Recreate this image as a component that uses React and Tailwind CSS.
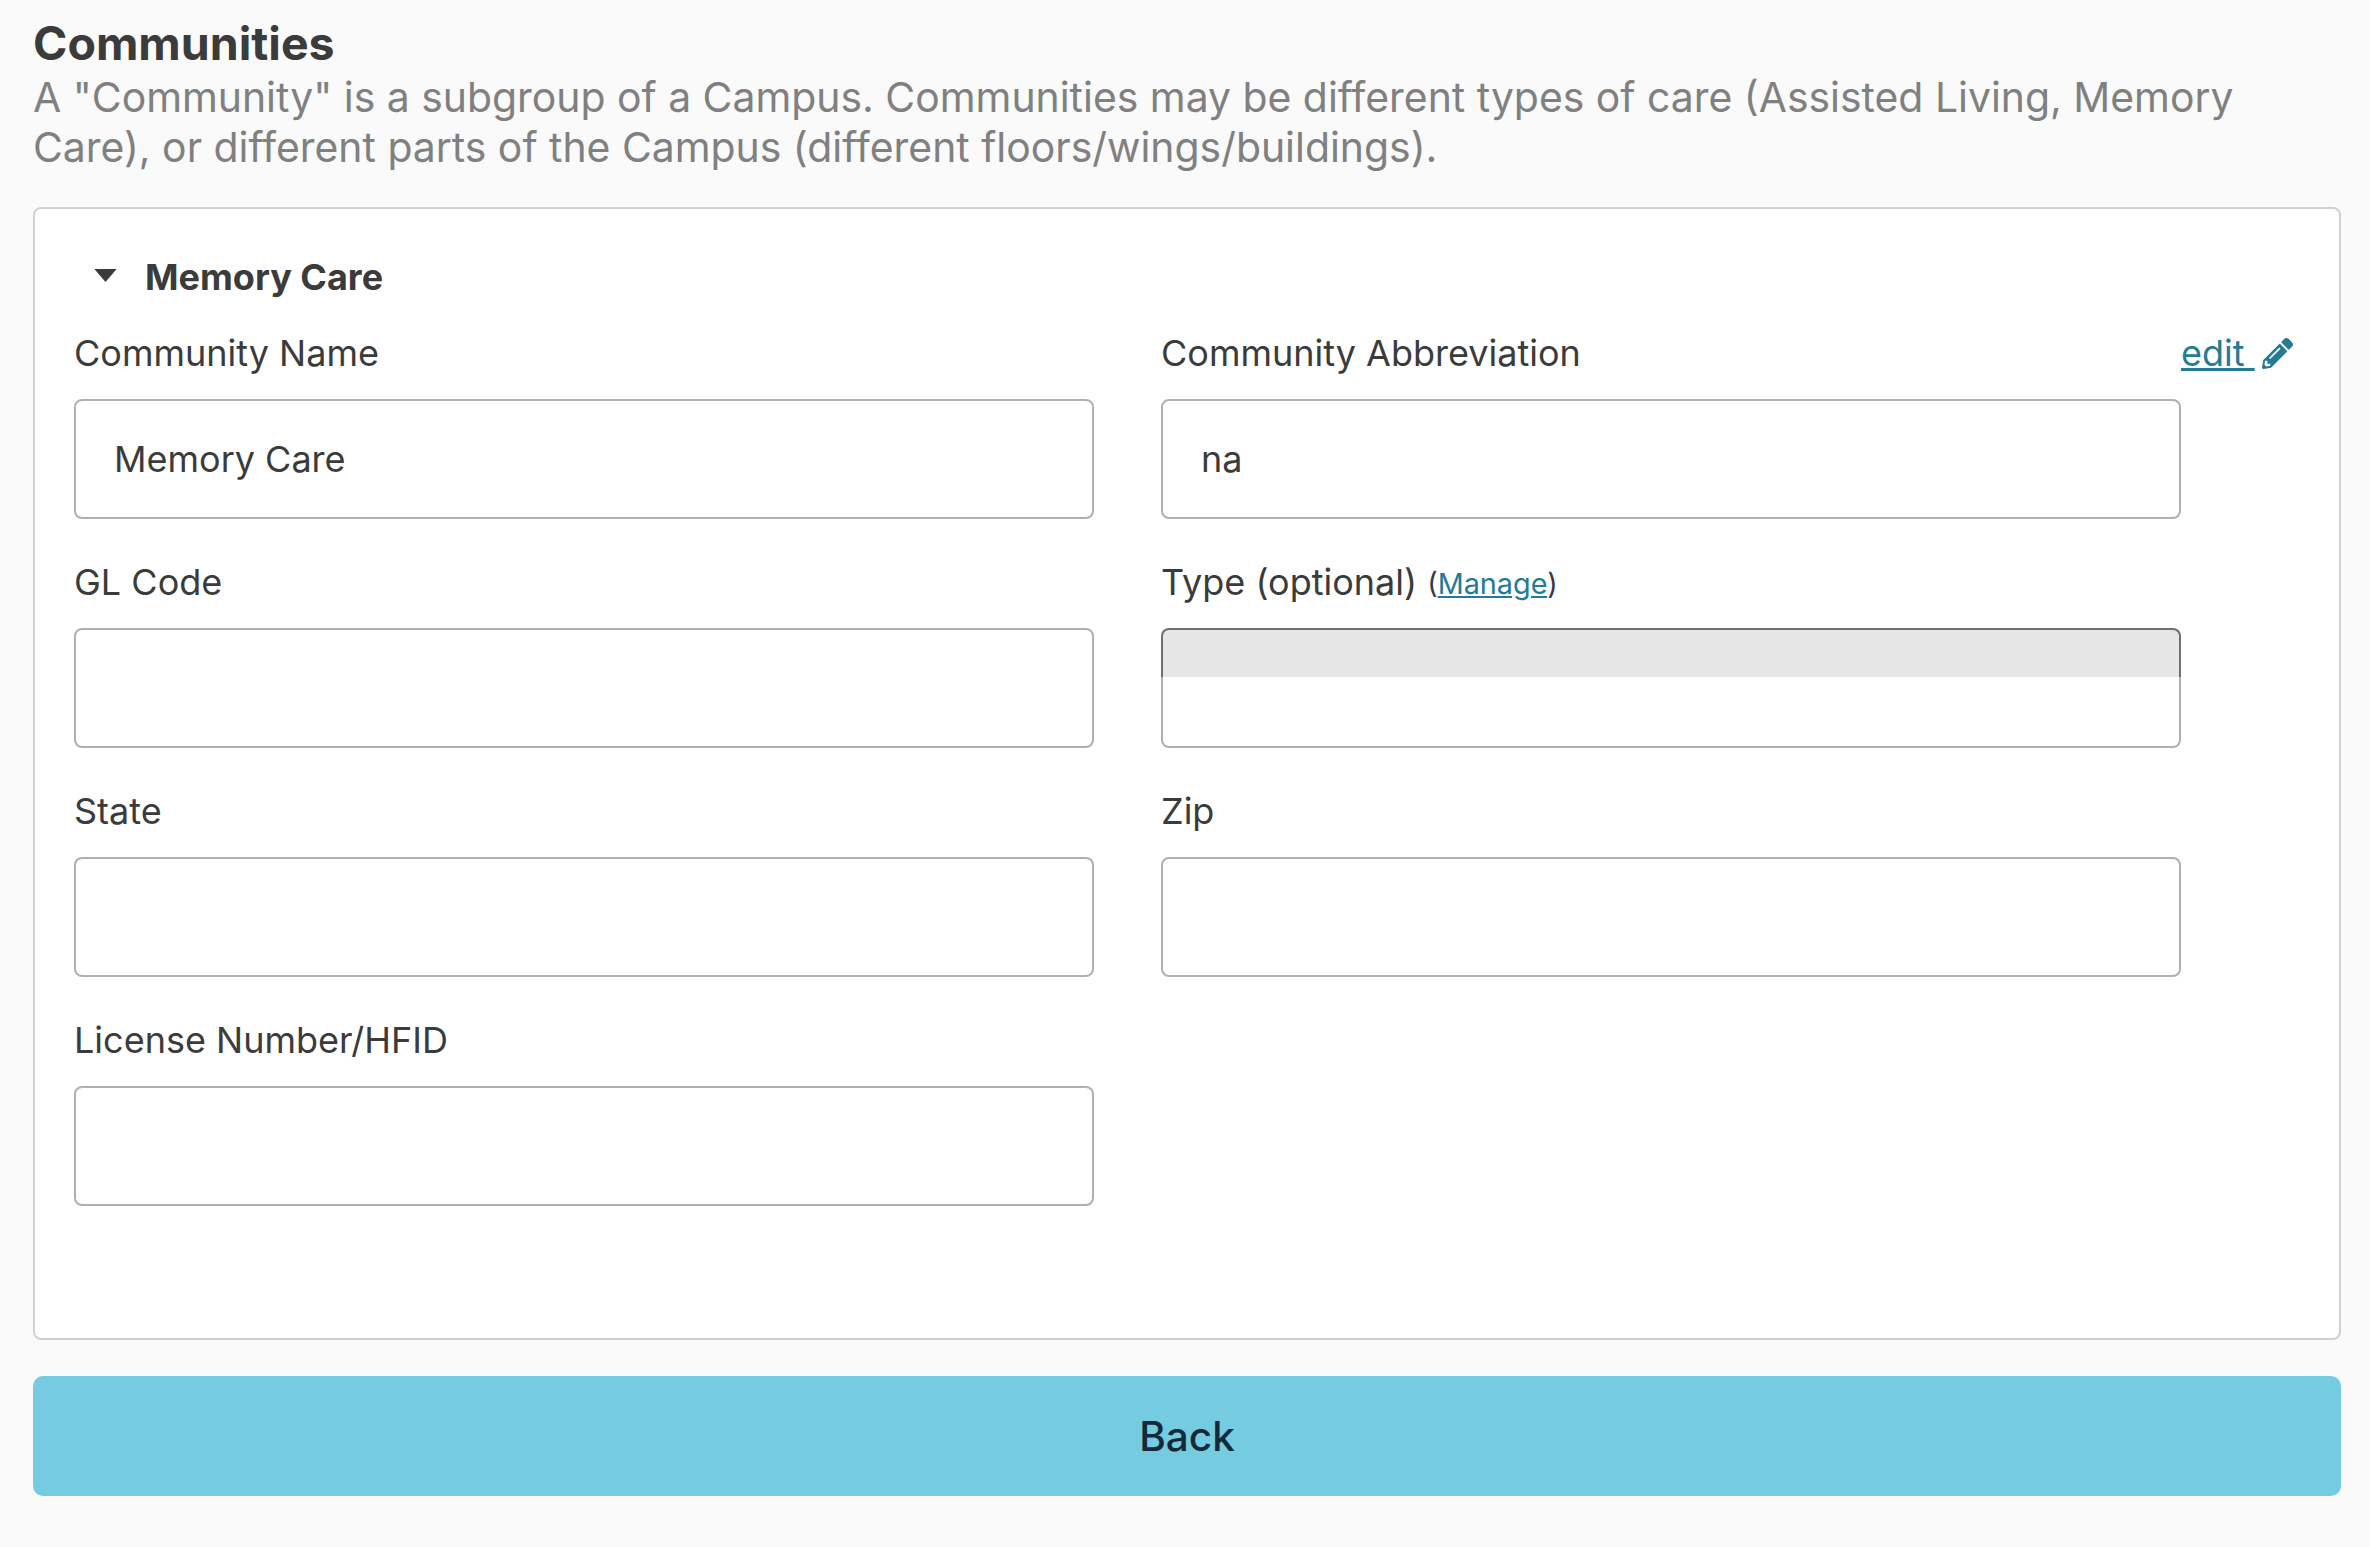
import { FaPencilAlt } from "react-icons/fa";

const FONT = "font-['Inter','Liberation_Sans',sans-serif]";

function Field({ label, value, extra, select }) {
  return (
    <div className="w-[1020px] relative">
      <div className="h-[50px] flex items-center text-[36px] leading-[50px] text-[#3b3b3b] whitespace-nowrap">
        {label}
        {extra}
      </div>
      {select ? (
        <div className="mt-[21px] h-[120px] flex flex-col">
          <div className="h-[49px] rounded-t-[8px] bg-[#e6e6e6] border-2 border-b-0 border-[#707070]" />
          <div className="h-[71px] rounded-b-[8px] bg-white border-2 border-t-0 border-[#b0b0b0]" />
        </div>
      ) : (
        <div className="mt-[21px] h-[120px] rounded-[8px] border-2 border-[#b0b0b0] bg-white flex items-center pl-[38px] text-[36px] text-[#3b3b3b]">
          {value}
        </div>
      )}
    </div>
  );
}

export default function App() {
  return (
    <div className={`${FONT} min-h-[1547px] bg-[#fafafa] pl-[33px] pr-[29px] pt-[14px]`}>
      <h1 className="text-[46.500px] leading-[58px] font-bold text-[#3b3b3b]">Communities</h1>
      <p className="text-[40.900px] leading-[50px] text-[#808080]">
        A "Community" is a subgroup of a Campus. Communities may be different types of care (Assisted Living, Memory Care), or different parts of the Campus (different floors/wings/buildings).
      </p>
      <div className="mt-[35px] h-[1133px] rounded-[8px] border-2 border-[#d0d0d0] bg-white pl-[39px] pt-[43px]">
        <div className="flex items-center h-[50px]">
          <svg viewBox="0 0 24 14" className="ml-[20px] mb-[4px] w-[23px] h-[13px]" fill="#3b3b3b">
            <path d="M0 0h24L12 14z" />
          </svg>
          <span className="ml-[28px] text-[36px] font-bold text-[#3b3b3b]">Memory Care</span>
        </div>
        <div className="mt-[26px] grid grid-cols-[1020px_1020px] gap-x-[67px] gap-y-[38px]">
          <Field label="Community Name" value="Memory Care" />
          <Field
            label="Community Abbreviation"
            value="na"
            extra={
              <span className="absolute left-full top-0 h-[50px] flex items-center text-[36px] text-[#237b96]">
                <a className="underline">edit&nbsp;</a>
                <FaPencilAlt className="ml-[7px] text-[31px]" />
              </span>
            }
          />
          <Field label="GL Code" />
          <Field
            label="Type (optional)"
            select
            extra={
              <span className="ml-[10px] pt-[4px] text-[28.800px] text-[#3b3b3b]">
                (<a className="underline text-[#237b96]">Manage</a>)
              </span>
            }
          />
          <Field label="State" />
          <Field label="Zip" />
          <Field label="License Number/HFID" />
        </div>
      </div>
      <button className="mt-[36px] w-full h-[120px] pt-[2px] rounded-[10px] bg-[#75cbdf] text-[40.500px] font-medium text-[#142a38]">
        Back
      </button>
    </div>
  );
}
